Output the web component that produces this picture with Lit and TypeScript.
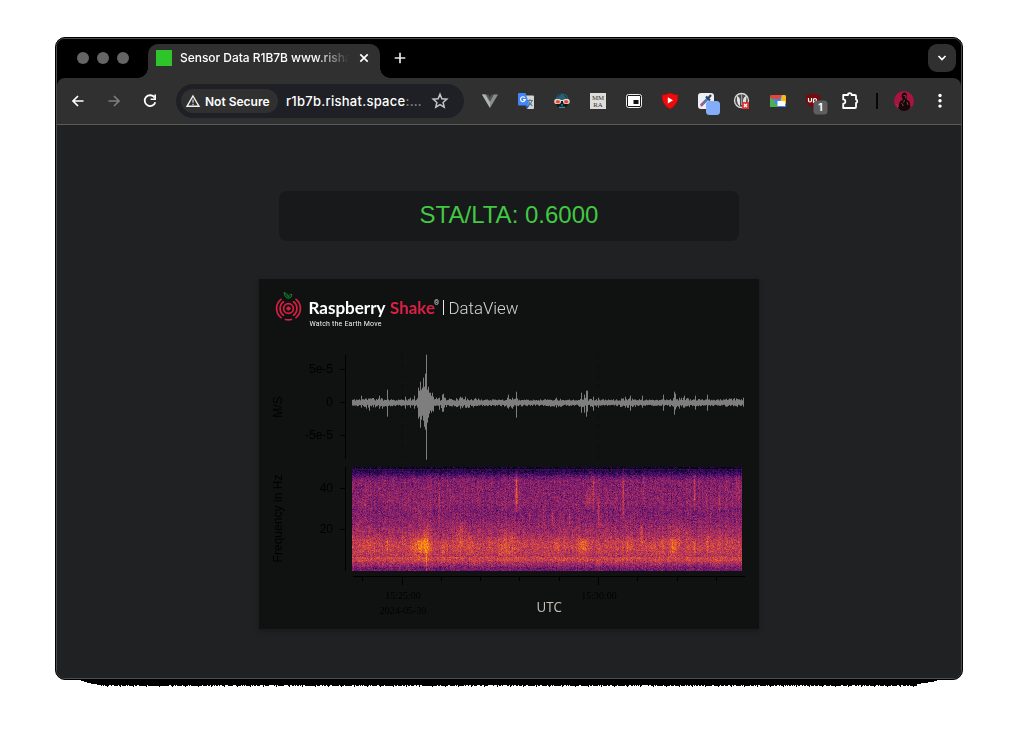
import { LitElement, html, svg, css } from "lit";
import { customElement } from "lit/decorators.js";

/** Deterministic pseudo-random generator so that every render is identical. */
function random(seed: number) {
  let s = seed;
  return () => {
    s = (s + 0x6d2b79f5) | 0;
    let t = Math.imul(s ^ (s >>> 15), 1 | s);
    t = (t + Math.imul(t ^ (t >>> 7), 61 | t)) ^ t;
    return ((t ^ (t >>> 14)) >>> 0) / 4294967296;
  };
}

/** Inferno colour map stops. */
const INFERNO = [
  [0, 0, 4], [22, 11, 57], [66, 10, 104], [106, 23, 110], [147, 38, 103],
  [188, 55, 84], [221, 81, 58], [243, 120, 25], [252, 165, 10], [246, 215, 70], [252, 255, 164],
];
function inferno(v: number) {
  const p = Math.max(0, Math.min(0.999, v)) * (INFERNO.length - 1);
  const i = Math.floor(p);
  const f = p - i;
  return INFERNO[i].map((c, k) => c + (INFERNO[i + 1][k] - c) * f);
}

/** Row position -> base intensity, from 50 Hz (top) down to 0 Hz. */
const PROFILE = [
  [0, 0.08], [1, 0.06], [2, 0.17], [3, 0.13], [6, 0.18], [9, 0.28], [13, 0.36], [25, 0.37], [36, 0.38],
  [44, 0.35], [52, 0.37], [60, 0.41], [68, 0.45], [74, 0.51], [80, 0.53], [86, 0.5], [89, 0.48],
  [90, 0.55], [93, 0.54], [95, 0.47], [98, 0.41], [100, 0.34], [104, 0.32],
];
function profile(y: number) {
  for (let i = 1; i < PROFILE.length; i++) {
    const [y1, v1] = PROFILE[i];
    const [y0, v0] = PROFILE[i - 1];
    if (y <= y1) return v0 + ((v1 - v0) * (y - y0)) / (y1 - y0);
  }
  return 0.3;
}

/** Vertical streaks and glows: centre x, centre y, half width, half height, gain. */
const EVENTS = [
  [13, 34, 0.8, 22, 0.11], [35, 78, 1, 8, 0.14], [64, 78, 7, 12, 0.07], [71, 78, 7, 8, 0.15],
  [74, 75, 2, 20, 0.09], [74, 97, 0.7, 12, 0.13], [87, 38, 0.8, 20, 0.11], [91, 82, 3, 8, 0.06], [68, 50, 12, 20, 0.03],
  [108, 68, 5, 16, 0.08], [118, 76, 3, 10, 0.06], [17, 78, 5, 8, 0.04], [154, 76, 10, 14, 0.06],
  [164, 24, 1.1, 17, 0.27], [177, 50, 0.8, 9, 0.12], [191, 45, 0.8, 8, 0.09], [200, 50, 1, 8, 0.14],
  [217, 50, 0.8, 7, 0.15], [204, 78, 3, 6, 0.07], [230, 78, 4, 7, 0.14], [241, 24, 1, 19, 0.16],
  [236, 32, 3, 9, 0.07], [246, 46, 0.8, 14, 0.13], [271, 28, 1, 26, 0.12], [289, 67, 1.2, 11, 0.13],
  [291, 20, 1, 16, 0.07], [276, 77, 4, 8, 0.06], [310, 78, 2, 8, 0.09], [321, 80, 4, 9, 0.11],
  [342, 22, 0.9, 18, 0.15], [342, 80, 1, 7, 0.13], [354, 32, 1, 10, 0.08], [355, 77, 1, 9, 0.1],
  [367, 34, 0.8, 10, 0.1], [386, 20, 3, 14, 0.05], [324, 66, 10, 12, 0.04],
];

/** Seismogram peaks: x, upward reach, downward reach. */
const PEAKS: number[][] = [
  [361, 7, 5], [366, 4, 6], [369, 4, 8], [379, 7, 6], [382, 4, 6], [387, 13, 14], [405, 6, 6], [410, 5, 5],
  [414, 7, 6], [418, 15, 16], [419, 12, 14], [420, 21, 25], [421, 13, 17], [422, 15, 13], [423, 25, 18], [424, 16, 24],
  [425, 29, 27], [426, 48, 57], [427, 13, 20], [428, 16, 15], [429, 10, 11], [430, 10, 8], [431, 7, 10],
  [432, 10, 8], [433, 6, 9], [439, 5, 7], [442, 8, 9], [443, 9, 9], [460, 6, 6], [465, 6, 5], [507, 5, 5],
  [508, 8, 6], [512, 5, 6], [516, 11, 15], [556, 5, 5], [581, 10, 10], [584, 8, 10], [586, 12, 14],
  [587, 12, 9], [593, 6, 8], [598, 5, 5], [625, 6, 5], [630, 7, 8], [642, 7, 5], [663, 8, 8], [674, 11, 12],
  [675, 9, 7], [679, 5, 6], [683, 5, 5], [684, 7, 5], [695, 7, 7], [707, 8, 8], [743, 5, 4],
];

function wavePath() {
  const rnd = random(11);
  const base: Record<number, number[]> = {};
  for (const [x, u, d] of PEAKS) base[x] = [u, d];
  let d = "";
  for (let x = 352; x < 744; x++) {
    const swell =
      1.8 * Math.exp(-(((x - 373) / 14) ** 2)) + 3 * Math.exp(-(((x - 425) / 10) ** 2)) +
      2.4 * Math.exp(-(((x - 442) / 6) ** 2)) + 2.2 * Math.exp(-(((x - 466) / 13) ** 2)) +
      1.8 * Math.exp(-(((x - 512) / 8) ** 2)) + 1.1 * Math.exp(-(((x - 555) / 10) ** 2)) +
      1.6 * Math.exp(-(((x - 586) / 9) ** 2)) + 2.2 * Math.exp(-(((x - 627) / 8) ** 2)) +
      1.7 * Math.exp(-(((x - 680) / 14) ** 2)) + 1.2 * Math.exp(-(((x - 735) / 12) ** 2));
    let up = 2 + rnd() * (1.4 + swell);
    let down = 2 + rnd() * (1.4 + swell);
    if (base[x]) [up, down] = base[x];
    d += `M${x - 258.5} ${(123.7 - up).toFixed(1)}V${(123.7 + down).toFixed(1)}`;
  }
  return d;
}
const WAVE = wavePath();

const icon = (content: unknown, size = 18) =>
  html`<span class="slot"><svg width=${size} height=${size} viewBox="0 0 ${size} ${size}">${content}</svg></span>`;

const backIcon = svg`<path d="M14.500 9H4M9 4L4 9l5 5" fill="none" stroke="#fff" stroke-width="1.700"/>`;
const forwardIcon = svg`<path d="M3.500 9H14M9 4l5 5-5 5" fill="none" stroke="#7d7d7d" stroke-width="1.700"/>`;
const reloadIcon = svg`<path d="M13.600 5.600A5.400 5.400 0 1 0 14.300 10.200" fill="none" stroke="#fff" stroke-width="1.800"/><path d="M15 2.600V8H9.600V6.400H13.300V2.600z" fill="#fff"/>`;

const vueIcon = svg`<path d="M1 2.500H5.500L9 8.700l3.500-6.200H17L9 16z" fill="#8b8e8f"/><path d="M5 2.500H7.400L9 5.300l1.600-2.800H13L9 9.400z" fill="#4e5353"/><path d="M1 2.500H4L9 11v5z" fill="#b3b5b5"/>`;
const translateIcon = svg`
  <path d="M8 3.500h8a1 1 0 0 1 1 1V16a1 1 0 0 1-1 1H10z" fill="#d4d6d5"/>
  <path d="M10 8.500h6M13 7v1.500M11.500 9q1 3 4 5M15 9q-1 3-3.500 4.500" stroke="#607d8b" stroke-width="1.100" fill="none"/>
  <path d="M8.500 13.500h4L10 17z" fill="#2653b5"/>
  <path d="M2 1H8.500l4 12.500H2a1 1 0 0 1-1-1V2a1 1 0 0 1 1-1z" fill="#4285f4"/>
  <path d="M7.800 5.700A2.400 2.400 0 1 0 8.300 7.600H6" fill="none" stroke="#fff" stroke-width="1.100"/>`;
const spectaclesIcon = svg`
  <path d="M2.500 8Q3 1.500 9 1.500T15.500 8z" fill="#285f75"/><path d="M4.500 5l3-3M11 3l3 3" stroke="#14303c"/>
  <path d="M3 9h12v3q-1 4-6 4t-6-4z" fill="#111a20"/>
  <rect x="1.200" y="7" width="6.800" height="5" rx="2.200" fill="#e8d9cf"/><rect x="10" y="7" width="6.800" height="5" rx="2.200" fill="#e8d9cf"/>
  <path d="M7 8.500h4" stroke="#e8d9cf"/>
  <ellipse cx="4.800" cy="9.700" rx="2.200" ry="1.700" fill="#e94c32"/><ellipse cx="13.200" cy="9.700" rx="2.200" ry="1.700" fill="#e94c32"/>
  <path d="M6 15.300h6M8 13h2" stroke="#51a4bc"/>`;
const mmraIcon = svg`<path d="M1 1h16v16H1z" fill="#deddda"/>
  <text x="9" y="8.300" text-anchor="middle" class="mmra">MM</text><text x="9" y="15.300" text-anchor="middle" class="mmra">RA</text>`;
const pipIcon = svg`<rect x="1.500" y="2.500" width="15" height="13" rx="2" fill="#1b1b1b" stroke="#eee" stroke-width="1"/>
  <path d="M3 4h12v10H3z" fill="#fff"/><path d="M8.500 8h5v4h-5z" fill="#111"/>`;
const shieldPlayIcon = svg`<path d="M9 1Q13 3 17 3Q17 8 15.500 11Q13 15 9 17Q5 15 2.500 11Q1 8 1 3Q5 3 9 1z" fill="#f00b0b" stroke="#b80505" stroke-width=".6"/><path d="M6.800 5.200L12 8.300l-5.200 3.100z" fill="#fff"/>`;
const pipetteIcon = svg`<rect x="1" y="1" width="16" height="16" rx="3" fill="#edf0f2"/>
  <path d="M4 13.500L11 6.500" stroke="#497bb7" stroke-width="2.800"/><path d="M3.800 14.200l3.500-3.500" stroke="#e04a67" stroke-width="1.600"/>
  <path d="M9 4.500l4 4M11 6.500l3-3.500" stroke="#343f69" stroke-width="2.200"/>
  <rect x="9" y="9" width="14" height="14" rx="3.500" fill="#83adf8"/>`;
const blockerIcon = svg`<circle cx="8.500" cy="8.500" r="7" fill="#4a4a4a" stroke="#d9dad9" stroke-width="1.300"/>
  <path d="M4 3.500q3 2 3 5v6q-3-3-3-6zM10 14V8q1-4 4-4-1 3-1 6z" fill="#e4e4e4"/><path d="M8.600 2v11" stroke="#999" stroke-width="1.200"/>
  <path d="M9 10h7v7H9z" fill="#dc3730"/><path d="M11 12l3 3m0-3l-3 3" stroke="#fff" stroke-width="1.200"/>`;
const chromeWindowIcon = svg`<path d="M1 15V5q0-2 2-2h12q2 0 2 2v10z" fill="#4285f4"/>
  <path d="M1 6V4.500Q1 3 2.500 3H13l-3 4H5z" fill="#ea4335"/><path d="M13 3h2.500Q17 3 17 4.500V12l-6-1z" fill="#fbb914"/>
  <path d="M1 5.500L6 9l3 6H1z" fill="#4caf50"/><path d="M6 7h5v5H6z" fill="#3d85e8"/><path d="M8.500 9H16v5H8.500z" fill="#fff"/>`;
const ublockIcon = svg`<path d="M8 1q3 2 7 2v5q0 5-7 8Q1 13 1 8V3q4 0 7-2z" fill="#760b0e"/>
  <path d="M3.500 6v2.500q0 1.500 1.500 1.500T6.500 8.500V6M8.500 11V7q3-1 3 1t-3 1.500" fill="none" stroke="#fff" stroke-width="1.200"/>
  <rect x="8.500" y="8.500" width="14" height="14" rx="3.500" fill="#5d5e5f"/>
  <text x="15.500" y="19.200" text-anchor="middle" class="count">1</text>`;
const puzzleIcon = svg`<path d="M2.200 3H7V2.500a1.800 1.300 0 0 1 3.600 0V3H14a1 1 0 0 1 1 1V7.500h.4a1.300 1.800 0 0 1 0 3.400H15V15a1 1 0 0 1-1 1H2.200V11.700a2.100 2.100 0 0 0 0-4.300z" fill="none" stroke="#fff" stroke-width="1.800" stroke-linejoin="round"/>`;
const avatarIcon = svg`<circle cx="10" cy="10" r="10" fill="#a81440"/>
  <path d="M4 16.500l2-6 3-2-1.500-3Q8 1.500 10.500 1.500T13 5l-.5 3.500 3 2 1 6Q14 20 10 20T4 16.500z" fill="#15080b"/>
  <path d="M9.500 4.500l2.500.3-.5 2.500M7.500 12l2 3M13 11l1 3M10.500 9l-1 2.500M2.500 13l2 3" stroke="#8a5043" stroke-width=".9" fill="none"/>`;
const dotsIcon = svg`<g fill="#fff"><circle cx="9" cy="3.500" r="1.700"/><circle cx="9" cy="8.800" r="1.700"/><circle cx="9" cy="14.100" r="1.700"/></g>`;

@customElement("data-view")
class DataView extends LitElement {
  static styles = css`
    :host { display: grid; width: 500px; height: 350px; background: #101211; box-shadow: 0 2px 5px rgba(0, 0, 0, 0.25); }
    svg, canvas { grid-area: 1 / 1; display: block; }
    svg { width: 500px; height: 350px; }
    canvas { width: 390px; height: 104px; margin: 188px 0 0 93px; }
    .axis { font: 12px "Liberation Sans", sans-serif; fill: #000; }
    .time { font: 10px "Liberation Serif", serif; fill: #000; }
    .brand { font: 700 17px Lato, sans-serif; }
    .product { font: 300 17px Roboto, sans-serif; fill: #d5d5d5; }
    .tagline { font: 7px Roboto, sans-serif; fill: #f0f0f0; }
    .registered { font: 6.500px Roboto, sans-serif; fill: #ddd; }
    .utc { font: 14px "Open Sans", sans-serif; fill: #c5c1ba; }
  `;

  firstUpdated() {
    const canvas = this.renderRoot.querySelector("canvas")!;
    const ctx = canvas.getContext("2d")!;
    const image = ctx.createImageData(390, 104);
    const rnd = random(5);
    const columns = Array.from({ length: 390 }, () => (rnd() - 0.5) * 0.05);
    for (let y = 0; y < 104; y++) {
      for (let x = 0; x < 390; x++) {
        const noise = rnd() + rnd() + rnd() - 1.5;
        let v = profile(y) + noise * (y === 2 ? 0.06 : 0.115) + columns[x];
        if (rnd() < 0.02) v -= 0.13;
        for (const [cx, cy, w, h, gain] of EVENTS) {
          const dx = (x - cx) / w;
          const dy = (y - cy) / h;
          if (Math.abs(dx) < 2.5 && Math.abs(dy) < 2) v += gain * Math.exp(-dx * dx - dy * dy * dy * dy);
        }
        const [r, g, b] = inferno(v);
        image.data.set([r, g, b, 255], (y * 390 + x) * 4);
      }
    }
    ctx.putImageData(image, 0, 0);
  }

  render() {
    return html`
      <canvas width="390" height="104"></canvas>
      <svg viewBox="0 0 500 350">
        <g fill="none" stroke="#d91e43" stroke-width="1.700" stroke-linecap="round">
          <circle cx="29.500" cy="29.500" r="1.700" fill="#d91e43" stroke-width="1"/>
          <circle cx="29.500" cy="29.500" r="4.900"/>
          <path d="M24.500 22.800a8.300 8.300 0 0 0 0 13.400M34.500 22.800a8.300 8.300 0 0 1 0 13.400M22 20.300a11.800 11.800 0 0 0 0 18.400M37 20.300a11.800 11.800 0 0 1 0 18.400M26.500 40.500a11.500 11.500 0 0 0 6 0"/>
        </g>
        <path d="M29 19.500Q25 18 25 13.500Q29 14.500 29.300 18Q30 14.500 33 15.500Q33 19 29 19.500z" fill="#102b15" stroke="#1d8134" stroke-width=".9"/>
        <text class="brand" x="49.500" y="35" textLength="77" lengthAdjust="spacingAndGlyphs" fill="#fff">Raspberry</text>
        <text class="brand" x="131" y="35" textLength="45" lengthAdjust="spacingAndGlyphs" fill="#db1f45">Shake</text>
        <text class="registered" x="175" y="26">®</text>
        <path d="M184.500 21v15" stroke="#e8e8e8"/>
        <text class="product" x="189.500" y="35" textLength="70" lengthAdjust="spacingAndGlyphs">DataView</text>
        <text class="tagline" x="50.500" y="46.500" textLength="72">Watch the Earth Move</text>

        <path d="M143.500 75V180M339.500 75V180" stroke="#0b0d0c" stroke-dasharray="5 5"/>
        <path d=${WAVE} stroke="#7e7e7e" fill="none"/>
        <path d="M86.500 76V180M81 90.500h5M81 123.500h5M81 156.500h5M86.500 188V292M81 209.500h5M81 250.500h5M94 297.500H486" stroke="#000" fill="none"/>
        <path d="M143.500 298v8M339.500 298v8M103.500 298v4M182.500 298v4M221.500 298v4M260.500 298v4M300.500 298v4M378.500 298v4M418.500 298v4M457.500 298v4" stroke="#000"/>
        <g class="axis" text-anchor="end">
          <text x="74" y="94">5e-5</text><text x="74" y="127">0</text><text x="74" y="160">-5e-5</text>
          <text x="74" y="213">40</text><text x="74" y="254">20</text>
        </g>
        <g class="axis" text-anchor="middle">
          <text transform="translate(23 128) rotate(-90)">M/S</text>
          <text transform="translate(23 239.500) rotate(-90)" textLength="88">Frequency in Hz</text>
        </g>
        <g class="time" text-anchor="middle">
          <text x="144" y="320">15:25:00</text><text x="144" y="335">2024-05-30</text><text x="340" y="320">15:30:00</text>
        </g>
        <text class="utc" x="277.500" y="333" textLength="25.500" lengthAdjust="spacingAndGlyphs">UTC</text>
      </svg>`;
  }
}

/** Ragged lower edge of the window's shadow. */
function shadowPath() {
  const rnd = random(3);
  let d = "M24 0L30 2L38 4L46 5";
  for (let x = 46; x < 862; x++) {
    const y = x % 13 === 0 ? 6.5 : rnd() < 0.35 ? 5 : 6;
    d += `V${y}H${x + 1}`;
  }
  return d + "V4L877 2L883 0z";
}

@customElement("app-root")
class AppRoot extends LitElement {
  static styles = css`
    :host { display: block; box-sizing: border-box; width: 1018px; height: 753px; padding: 37px 55px 0; background: #fff; overflow: hidden; font-family: Inter, sans-serif; }
    .window { box-sizing: border-box; width: 908px; height: 643px; border: 1px solid #000; border-radius: 10px; background: #000; }
    .frame { box-sizing: border-box; height: 641px; border: 1px solid #4b4d4e; border-radius: 9px; overflow: hidden; display: flex; flex-direction: column; }
    .strip { height: 39px; flex: none; display: flex; background: #000; }
    .lights { display: flex; gap: 8px; padding: 13px 19px 0 20px; }
    .light { width: 12px; height: 12px; border-radius: 50%; background: #656565; }
    .tab { position: relative; box-sizing: border-box; width: 232px; height: 34px; margin-top: 5px; padding: 0 10px 6px 8px; display: flex; align-items: center; border-radius: 10px 10px 0 0; background: #303030; }
    .tab::before, .tab::after { content: ""; position: absolute; bottom: 0; width: 10px; height: 10px; }
    .tab::before { left: -10px; background: radial-gradient(circle at 0 0, #000 9.500px, #303030 10px); }
    .tab::after { right: -10px; background: radial-gradient(circle at 100% 0, #000 9.500px, #303030 10px); }
    .favicon { width: 16px; height: 16px; flex: none; background: #2ec52b; margin-right: 8px; }
    .title { width: 170px; flex: none; white-space: nowrap; font-size: 12px; line-height: 16px; font-weight: 500; color: #fff; letter-spacing: -0.040px; -webkit-mask-image: linear-gradient(90deg, #000 136px, transparent 169px); mask-image: linear-gradient(90deg, #000 136px, transparent 169px); }
    .close { margin-left: 8px; flex: none; }
    .plus { margin: 13px 0 0 14px; }
    .search { margin: 5px 5px 0 auto; width: 28px; height: 28px; border-radius: 9px; background: #303030; display: grid; place-items: center; }
    .toolbar { box-sizing: border-box; height: 46px; flex: none; display: flex; align-items: center; padding: 0 3px; background: #303030; border-radius: 8px 8px 0 0; }
    .slot { width: 36px; height: 36px; flex: none; display: grid; place-items: center; }
    svg { display: block; overflow: visible; }
    .address { box-sizing: border-box; width: 288px; height: 34px; margin: 0 8px; padding: 0 15px 0 5px; border-radius: 17px; background: #1f2025; display: flex; align-items: center; white-space: nowrap; color: #fff; }
    .chip { box-sizing: border-box; width: 97px; height: 24px; padding-left: 5px; border-radius: 12px; background: #303030; display: flex; align-items: center; gap: 5px; font-size: 12px; font-weight: 600; }
    .url { margin-left: 8px; width: 139px; font-size: 13px; font-weight: 500; letter-spacing: 0.270px; }
    .rest { color: #999; }
    .star { margin-left: auto; }
    .divider { width: 2px; height: 16px; margin: 0 8px; background: #070707; }
    .page { flex: 1; border-top: 1px solid #5b5b5c; background: #202123; display: flex; flex-direction: column; align-items: center; gap: 38px; padding-top: 66px; }
    .ratio { width: 460px; height: 50px; border-radius: 8px; background: #18191b; color: #42c943; font: 24px/48px "Liberation Sans", sans-serif; text-align: center; }
    .mmra { font: 6.800px "Liberation Serif", serif; fill: #333; }
    .count { font: 700 10px Inter, sans-serif; fill: #fff; }
  `;

  render() {
    return html`
      <div class="window">
        <div class="frame">
          <div class="strip">
            <div class="lights"><i class="light"></i><i class="light"></i><i class="light"></i></div>
            <div class="tab">
              <i class="favicon"></i>
              <span class="title">Sensor Data R1B7B www.risha</span>
              <svg class="close" width="12" height="12"><path d="M2.300 2.300l7.400 7.400M9.700 2.300l-7.400 7.400" stroke="#fff" stroke-width="1.700"/></svg>
            </div>
            <svg class="plus" width="12" height="12"><path d="M6 .7V11.300M.7 6H11.300" stroke="#e8e8e8" stroke-width="1.700"/></svg>
            <div class="search"><svg width="10" height="8"><path d="M1.500 2L5 5.500 8.500 2" fill="none" stroke="#fff" stroke-width="1.700"/></svg></div>
          </div>
          <div class="toolbar">
            ${icon(backIcon)}${icon(forwardIcon)}${icon(reloadIcon)}
            <div class="address">
              <div class="chip">
                <svg width="14" height="14"><path d="M7 2L13 12.300H1z" fill="none" stroke="#eee" stroke-width="1.400"/><path d="M7 5.500v3.300M7 9.800v1.400" stroke="#ccc" stroke-width="1.300"/></svg>
                Not Secure
              </div>
              <span class="url">r1b7b.rishat.space<span class="rest">:…</span></span>
              <svg class="star" width="18" height="18"><path d="M9 2.300l1.900 4.500 4.900.4-3.700 3.200 1.100 4.800L9 12.700l-4.200 2.500 1.100-4.800L2.200 7.200l4.900-.4z" fill="none" stroke="#c5c6c9" stroke-width="1.500"/></svg>
            </div>
            ${[vueIcon, translateIcon, spectaclesIcon, mmraIcon, pipIcon, shieldPlayIcon, pipetteIcon,
              blockerIcon, chromeWindowIcon, ublockIcon, puzzleIcon].map((i) => icon(i))}
            <i class="divider"></i>
            ${icon(avatarIcon, 20)}${icon(dotsIcon)}
          </div>
          <main class="page">
            <div class="ratio">STA/LTA: 0.6000</div>
            <data-view></data-view>
          </main>
        </div>
      </div>
      <svg width="908" height="8"><path d=${shadowPath()} fill="#000" shape-rendering="crispEdges"/></svg>`;
  }
}
